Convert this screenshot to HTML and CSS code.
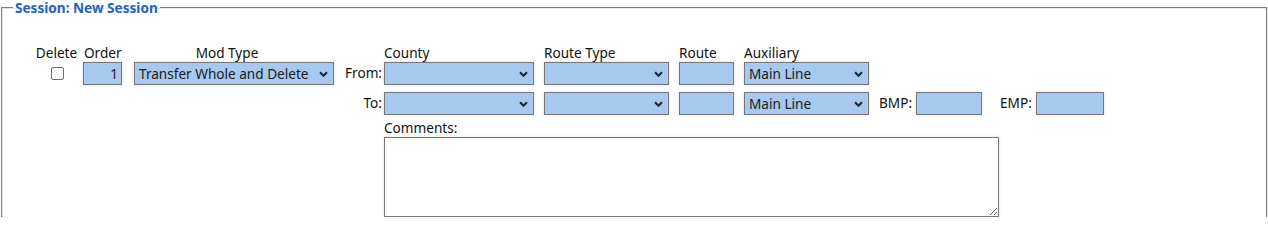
FILE: index.html
```html
<!DOCTYPE html>
<html>
<head>
<meta charset="utf-8">
<link rel="stylesheet" href="styles.css">
</head>
<body>
<fieldset class="session">
  <legend class="session-title">Session: New Session</legend>
  <div class="mods">
    <div class="hdr c-del">Delete</div>
    <div class="hdr c-ord">Order</div>
    <div class="hdr c-mod">Mod Type</div>
    <div class="hdr c-lbl"></div>
    <div class="hdr c-left">County</div>
    <div class="hdr c-left">Route Type</div>
    <div class="hdr c-left">Route</div>
    <div class="hdr c-left">Auxiliary</div>
    <div class="hdr"></div>

    <div class="cell c-del"><span class="check"></span></div>
    <div class="cell"><span class="field num w-ord">1</span></div>
    <div class="cell"><span class="field sel w-mod">Transfer Whole and Delete<svg class="chev" viewBox="0 0 8 5"><path d="M0.9 0.9 L4 4 L7.1 0.9" /></svg></span></div>
    <div class="cell rlabel">From:</div>
    <div class="cell"><span class="field sel w-county"><svg class="chev" viewBox="0 0 8 5"><path d="M0.9 0.9 L4 4 L7.1 0.9" /></svg></span></div>
    <div class="cell"><span class="field sel w-rt"><svg class="chev" viewBox="0 0 8 5"><path d="M0.9 0.9 L4 4 L7.1 0.9" /></svg></span></div>
    <div class="cell"><span class="field w-route"></span></div>
    <div class="cell"><span class="field sel w-aux">Main Line<svg class="chev" viewBox="0 0 8 5"><path d="M0.9 0.9 L4 4 L7.1 0.9" /></svg></span></div>
    <div class="cell"></div>

    <div class="cell r2 span3"></div>
    <div class="cell r2 rlabel">To:</div>
    <div class="cell r2"><span class="field sel w-county"><svg class="chev" viewBox="0 0 8 5"><path d="M0.9 0.9 L4 4 L7.1 0.9" /></svg></span></div>
    <div class="cell r2"><span class="field sel w-rt"><svg class="chev" viewBox="0 0 8 5"><path d="M0.9 0.9 L4 4 L7.1 0.9" /></svg></span></div>
    <div class="cell r2"><span class="field w-route"></span></div>
    <div class="cell r2"><span class="field sel w-aux">Main Line<svg class="chev" viewBox="0 0 8 5"><path d="M0.9 0.9 L4 4 L7.1 0.9" /></svg></span></div>
    <div class="cell r2 mp">
      <span class="mp-label">BMP:</span><span class="field w-bmp"></span>
      <span class="mp-label emp">EMP:</span><span class="field w-emp"></span>
    </div>

    <div class="comments">
      <div class="comments-label">Comments:</div>
      <textarea class="comments-box"></textarea>
    </div>
  </div>
</fieldset>
</body>
</html>
```
FILE: styles.css
```css
html, body {
  margin: 0;
  padding: 0;
  background: #ffffff;
}
body {
  font-family: "Noto Sans", "Open Sans", sans-serif;
  font-size: 13.6px;
  color: #111;
}
.session {
  margin: 0 1px 0 1px;
  padding: 0 0 0 11px;
  border: 1px solid #7d7d7d;
  border-bottom: none;
  box-shadow: inset 1px 1px 0 #e6e6e6, 1px 0 0 #e6e6e6;
}
.session-title {
  padding: 0 2px;
  color: #1e63c8;
  font-weight: bold;
  font-size: 13.6px;
  line-height: 15px;
}
.mods {
  display: grid;
  grid-template-columns: 53px 51px 200px 50px 160px 135px 65px 135px auto;
  margin-left: 17px;
  margin-top: 29px;
  align-items: center;
}
.hdr {
  height: 18px;
  line-height: 18px;
  white-space: nowrap;
}
.c-del { text-align: center; }
.c-ord { text-align: left; padding-left: 1px; }
.c-mod { text-align: center; padding-right: 14px; }
.c-left { text-align: left; }
.cell {
  height: 23px;
  display: flex;
  align-items: center;
}
.cell.c-del { justify-content: center; }
.r2 { margin-top: 7px; }
.span3 { grid-column: span 3; }
.rlabel {
  justify-content: flex-end;
  padding-right: 2px;
  line-height: 18px;
  position: relative;
  top: -1px;
}
.check {
  display: block;
  width: 11px;
  height: 11px;
  border: 1px solid #6f6f6f;
  border-radius: 2px;
  background: #fff;
  margin-left: 1px;
}
.field {
  box-sizing: border-box;
  display: flex;
  align-items: center;
  height: 23px;
  background: #a8c9ef;
  border: 1px solid #777;
  box-shadow: 0 0 3px rgba(0, 0, 0, 0.14);
  color: #1a1a1a;
  padding: 0 4px;
  white-space: nowrap;
  position: relative;
}
.sel { padding-right: 20px; }
.num { justify-content: flex-end; padding-right: 3px; }
.w-ord { width: 39px; }
.w-mod { width: 200px; }
.w-county { width: 150px; }
.w-rt { width: 125px; }
.w-route { width: 55px; }
.w-aux { width: 125px; }
.w-bmp { width: 66px; }
.w-emp { width: 68px; }
.chev {
  position: absolute;
  right: 5px;
  top: 8px;
  width: 9px;
  height: 6px;
}
.chev path {
  fill: none;
  stroke: #1b2636;
  stroke-width: 1.9;
}
.mp { padding-left: 0; }
.mp-label { margin-right: 4px; position: relative; top: -1px; }
.emp { margin-left: 18px; }
.comments {
  grid-column: 5 / -1;
  margin-top: 4px;
}
.comments-label {
  height: 17px;
  line-height: 17px;
}
.comments-box {
  display: block;
  box-sizing: border-box;
  margin: 1px 0 0 0;
  width: 615px;
  height: 80px;
  border: 1px solid #777;
  background: #fff;
  padding: 2px;
  resize: both;
  box-shadow: 0 0 3px rgba(0, 0, 0, 0.12);
}
```
